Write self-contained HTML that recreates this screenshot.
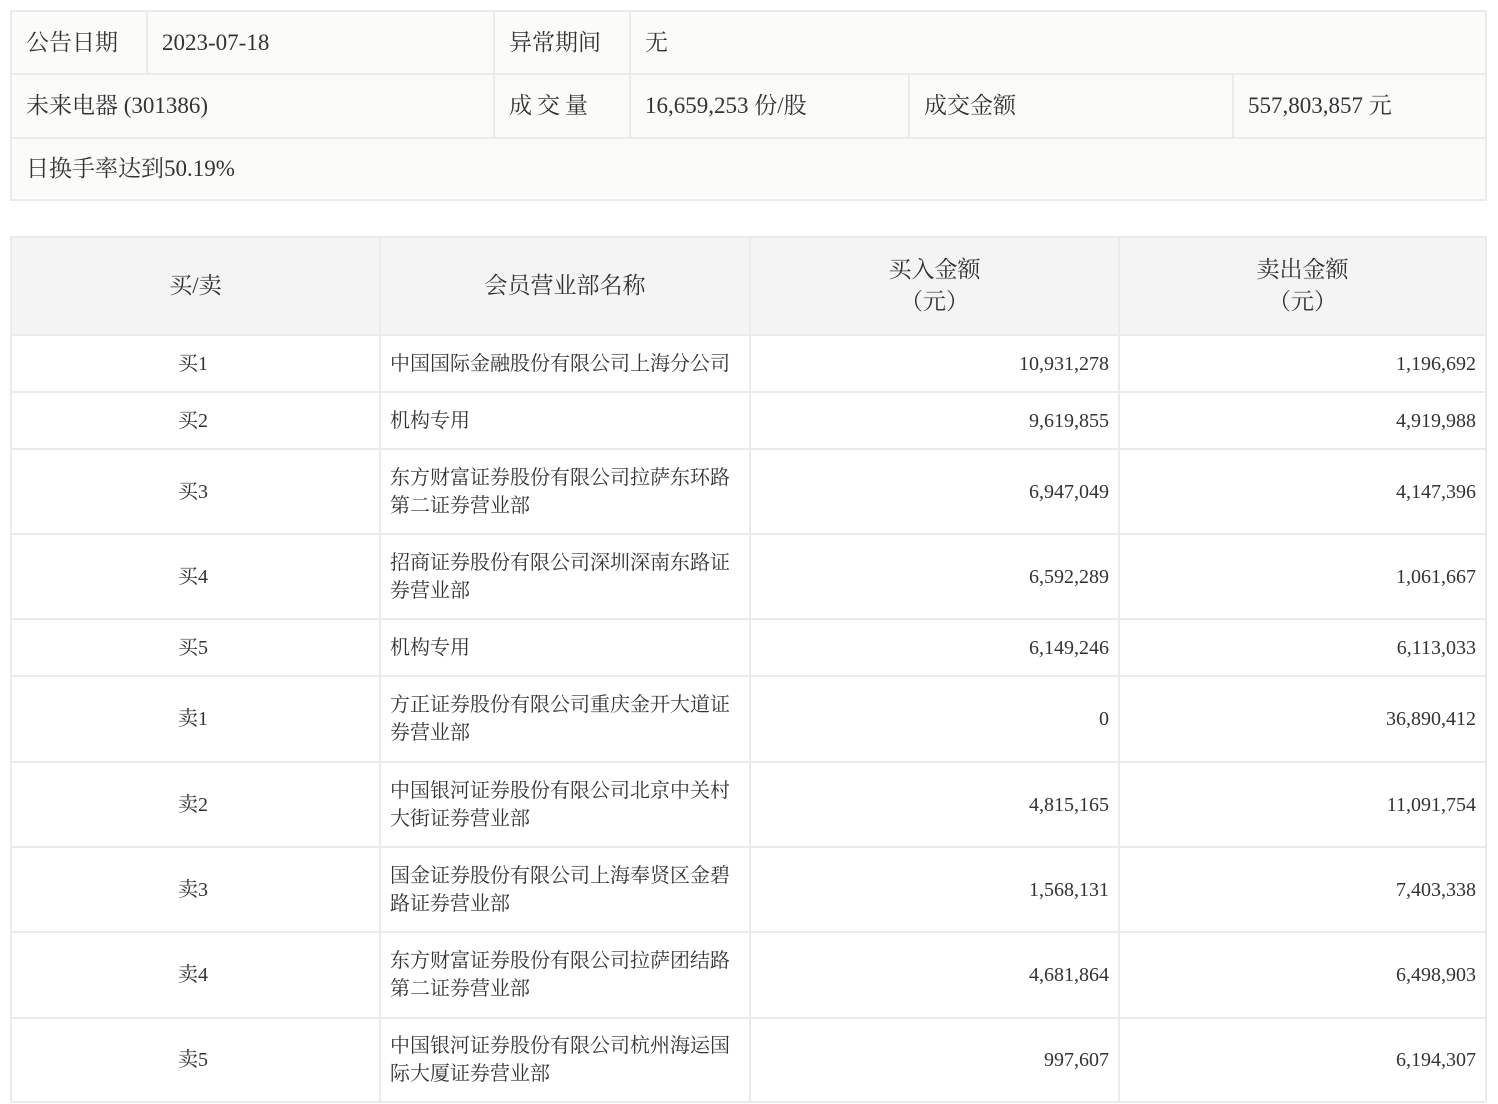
<!DOCTYPE html>
<html><head><meta charset="utf-8"><style>
body{margin:0;background:#fff;width:1498px;height:1104px;position:relative;overflow:hidden;font-family:"Liberation Serif","Noto Serif CJK SC",serif;color:#333}
.c{position:absolute;box-sizing:border-box;border:2px solid #ebebeb;display:flex;align-items:center;padding:0 14px;line-height:28px}
.t{background:#fbfbf9;font-size:23px}
.h{background:#f4f4f4;font-size:23px;justify-content:center;text-align:center;line-height:32px}
.b{background:#fff;font-size:20px;padding-left:9px}
.ctr{justify-content:center}
.r{justify-content:flex-end;padding-right:9px}
</style></head><body>
<div class="c t" style="left:10px;top:10px;width:138px;height:65px">公告日期</div>
<div class="c t" style="left:146px;top:10px;width:349px;height:65px">2023-07-18</div>
<div class="c t" style="left:493px;top:10px;width:138px;height:65px">异常期间</div>
<div class="c t" style="left:629px;top:10px;width:858px;height:65px">无</div>
<div class="c t" style="left:10px;top:73px;width:485px;height:66px">未来电器 (301386)</div>
<div class="c t" style="left:493px;top:73px;width:138px;height:66px;letter-spacing:5px">成交量</div>
<div class="c t" style="left:629px;top:73px;width:281px;height:66px">16,659,253 份/股</div>
<div class="c t" style="left:908px;top:73px;width:326px;height:66px">成交金额</div>
<div class="c t" style="left:1232px;top:73px;width:255px;height:66px">557,803,857 元</div>
<div class="c t" style="left:10px;top:137px;width:1477px;height:64px">日换手率达到50.19%</div>

<div class="c h" style="left:10px;top:236px;width:371px;height:100px">买/卖</div>
<div class="c h" style="left:379px;top:236px;width:372px;height:100px">会员营业部名称</div>
<div class="c h" style="left:749px;top:236px;width:371px;height:100px">买入金额<br>（元）</div>
<div class="c h" style="left:1118px;top:236px;width:369px;height:100px">卖出金额<br>（元）</div>

<div class="c b ctr" style="left:10px;top:334px;width:371px;height:59px">买1</div>
<div class="c b" style="left:379px;top:334px;width:372px;height:59px">中国国际金融股份有限公司上海分公司</div>
<div class="c b r" style="left:749px;top:334px;width:371px;height:59px">10,931,278</div>
<div class="c b r" style="left:1118px;top:334px;width:369px;height:59px">1,196,692</div>

<div class="c b ctr" style="left:10px;top:391px;width:371px;height:59px">买2</div>
<div class="c b" style="left:379px;top:391px;width:372px;height:59px">机构专用</div>
<div class="c b r" style="left:749px;top:391px;width:371px;height:59px">9,619,855</div>
<div class="c b r" style="left:1118px;top:391px;width:369px;height:59px">4,919,988</div>

<div class="c b ctr" style="left:10px;top:448px;width:371px;height:87px">买3</div>
<div class="c b" style="left:379px;top:448px;width:372px;height:87px">东方财富证券股份有限公司拉萨东环路<br>第二证券营业部</div>
<div class="c b r" style="left:749px;top:448px;width:371px;height:87px">6,947,049</div>
<div class="c b r" style="left:1118px;top:448px;width:369px;height:87px">4,147,396</div>

<div class="c b ctr" style="left:10px;top:533px;width:371px;height:87px">买4</div>
<div class="c b" style="left:379px;top:533px;width:372px;height:87px">招商证券股份有限公司深圳深南东路证<br>券营业部</div>
<div class="c b r" style="left:749px;top:533px;width:371px;height:87px">6,592,289</div>
<div class="c b r" style="left:1118px;top:533px;width:369px;height:87px">1,061,667</div>

<div class="c b ctr" style="left:10px;top:618px;width:371px;height:59px">买5</div>
<div class="c b" style="left:379px;top:618px;width:372px;height:59px">机构专用</div>
<div class="c b r" style="left:749px;top:618px;width:371px;height:59px">6,149,246</div>
<div class="c b r" style="left:1118px;top:618px;width:369px;height:59px">6,113,033</div>

<div class="c b ctr" style="left:10px;top:675px;width:371px;height:88px">卖1</div>
<div class="c b" style="left:379px;top:675px;width:372px;height:88px">方正证券股份有限公司重庆金开大道证<br>券营业部</div>
<div class="c b r" style="left:749px;top:675px;width:371px;height:88px">0</div>
<div class="c b r" style="left:1118px;top:675px;width:369px;height:88px">36,890,412</div>

<div class="c b ctr" style="left:10px;top:761px;width:371px;height:87px">卖2</div>
<div class="c b" style="left:379px;top:761px;width:372px;height:87px">中国银河证券股份有限公司北京中关村<br>大街证券营业部</div>
<div class="c b r" style="left:749px;top:761px;width:371px;height:87px">4,815,165</div>
<div class="c b r" style="left:1118px;top:761px;width:369px;height:87px">11,091,754</div>

<div class="c b ctr" style="left:10px;top:846px;width:371px;height:87px">卖3</div>
<div class="c b" style="left:379px;top:846px;width:372px;height:87px">国金证券股份有限公司上海奉贤区金碧<br>路证券营业部</div>
<div class="c b r" style="left:749px;top:846px;width:371px;height:87px">1,568,131</div>
<div class="c b r" style="left:1118px;top:846px;width:369px;height:87px">7,403,338</div>

<div class="c b ctr" style="left:10px;top:931px;width:371px;height:88px">卖4</div>
<div class="c b" style="left:379px;top:931px;width:372px;height:88px">东方财富证券股份有限公司拉萨团结路<br>第二证券营业部</div>
<div class="c b r" style="left:749px;top:931px;width:371px;height:88px">4,681,864</div>
<div class="c b r" style="left:1118px;top:931px;width:369px;height:88px">6,498,903</div>

<div class="c b ctr" style="left:10px;top:1017px;width:371px;height:86px">卖5</div>
<div class="c b" style="left:379px;top:1017px;width:372px;height:86px">中国银河证券股份有限公司杭州海运国<br>际大厦证券营业部</div>
<div class="c b r" style="left:749px;top:1017px;width:371px;height:86px">997,607</div>
<div class="c b r" style="left:1118px;top:1017px;width:369px;height:86px">6,194,307</div>
</body></html>
